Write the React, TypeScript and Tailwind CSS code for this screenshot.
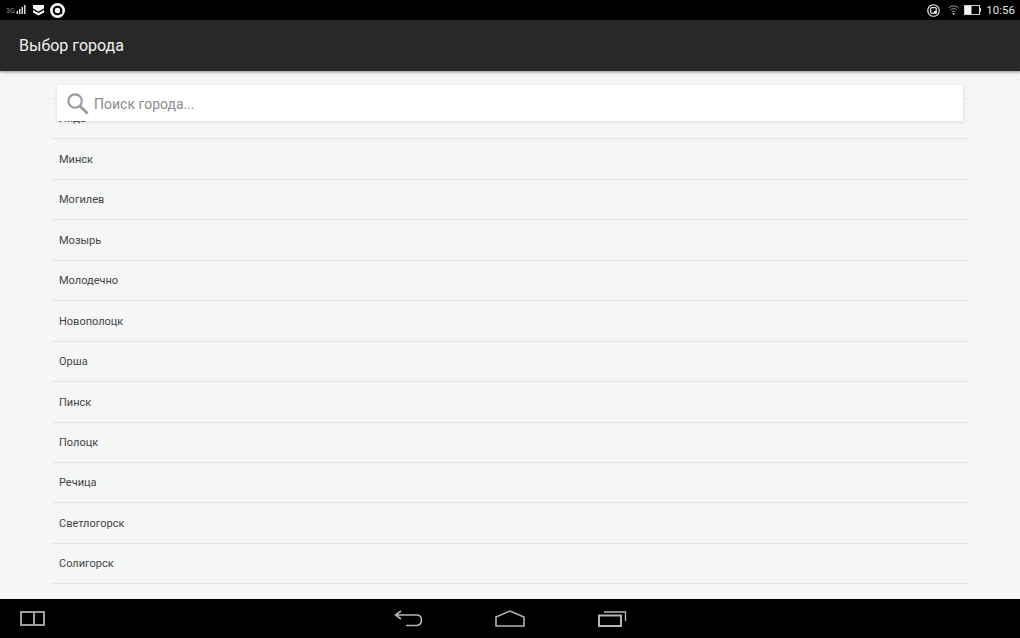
import React from "react";

const cities = ["Лида", "Минск", "Могилев", "Мозырь", "Молодечно", "Новополоцк", "Орша", "Пинск", "Полоцк", "Речица", "Светлогорск", "Солигорск"];

function StatusBar() {
  return (
    <div className="h-5 shrink-0 bg-black flex items-center justify-between pl-[6px] pr-[5px]">
      <div className="flex items-center">
        <svg width="20" height="12" viewBox="0 0 20 12" className="mr-[7px]">
          <text x="0" y="9" fontSize="7" fill="#8f8f8f" fontFamily="Roboto, sans-serif">3G</text>
          <rect x="10.500" y="7" width="1.500" height="3" fill="#d8d8d8" />
          <rect x="13" y="5" width="1.500" height="5" fill="#d8d8d8" />
          <rect x="15.500" y="3" width="1.500" height="7" fill="#d8d8d8" />
          <rect x="18" y="1" width="1.500" height="9" fill="#d8d8d8" />
        </svg>
        <svg width="11" height="12" viewBox="0 0 11 12" className="mr-[6px]">
          <path d="M0 1h11v3.500L5.500 7.500 0 4.500z" fill="#f2f2f2" />
          <path d="M0 6l5.500 3 5.500-3v2.500L5.500 11.500 0 8.500z" fill="#f2f2f2" />
        </svg>
        <svg width="15" height="15" viewBox="0 0 15 15">
          <circle cx="7.500" cy="7.500" r="7.500" fill="#f5f5f5" />
          <circle cx="7.500" cy="7.500" r="3.800" fill="none" stroke="#000" strokeWidth="2" />
          <rect x="10" y="7" width="2.200" height="4" fill="#000" />
        </svg>
      </div>
      <div className="flex items-center">
        <svg width="13" height="13" viewBox="0 0 14 14" className="mr-[8px]">
          <circle cx="7" cy="7" r="6.200" fill="none" stroke="#e8e8e8" strokeWidth="1.300" />
          <rect x="4" y="3.800" width="6" height="6" rx="1" fill="none" stroke="#e8e8e8" strokeWidth="1.300" />
          <circle cx="9" cy="9" r="1.600" fill="#e8e8e8" />
        </svg>
        <svg width="11" height="10" viewBox="0 0 11 10" className="mr-[5px]">
          <path d="M0.500 3a7 7 0 0 1 10 0M2.200 5a4.600 4.600 0 0 1 6.600 0M3.800 7a2.300 2.300 0 0 1 3.400 0" fill="none" stroke="#9c9c9c" strokeWidth="1" />
          <circle cx="5.500" cy="8.700" r="1" fill="#c8c8c8" />
        </svg>
        <svg width="17" height="10" viewBox="0 0 17 10" className="mr-[5px]">
          <rect x="0.500" y="0.500" width="15" height="9" fill="none" stroke="#cfcfcf" />
          <rect x="1" y="1" width="6.500" height="8" fill="#f5f5f5" />
          <rect x="16" y="3" width="1" height="4" fill="#cfcfcf" />
        </svg>
        <span className="text-[11.500px] leading-5 text-[#e4e4e4]">10:56</span>
      </div>
    </div>
  );
}

function NavBar() {
  return (
    <div className="h-[39px] shrink-0 bg-black grid grid-cols-[1fr_auto_1fr] items-center">
      <div className="pl-5">
        <svg width="25" height="15" viewBox="0 0 25 15" className="block">
          <path d="M1 1h23v13H1zM14 1v13" fill="none" stroke="#9e9e9e" strokeWidth="2" />
        </svg>
      </div>
      <div className="flex items-center">
        <svg width="29" height="17" viewBox="0 0 29 17" className="mr-[72px] block">
          <path d="M7 1L1.500 5 7 9M1.500 5H22.500Q27.500 5 27.500 10T22.500 15.500H12" fill="none" stroke="#b4b4b4" strokeWidth="1.600" />
        </svg>
        <svg width="30" height="17" viewBox="0 0 30 17" className="mr-[73px] block">
          <path d="M1 7L15 1l14 6v9H1z" fill="none" stroke="#b4b4b4" strokeWidth="1.600" />
        </svg>
        <svg width="29" height="17" viewBox="0 0 29 17" className="block">
          <path d="M1 5.500h22v10.500H1z" fill="none" stroke="#b4b4b4" strokeWidth="2" />
          <path d="M6 2h21.500v9" fill="none" stroke="#b4b4b4" strokeWidth="1.400" />
        </svg>
      </div>
      <div />
    </div>
  );
}

export default function App() {
  return (
    <div className="w-[1020px] h-[638px] flex flex-col overflow-hidden bg-[#f5f7f6] font-['Roboto',sans-serif]">
      <StatusBar />
      <header className="h-[51px] shrink-0 bg-[#282828] flex items-center pl-[19px] pt-px text-[16px] text-[#f0f0f0] shadow-[0_1px_3px_rgba(0,0,0,0.45)] z-20">
        Выбор города
      </header>
      <main className="flex-1 min-h-0 overflow-hidden relative pl-[52px] pr-[51px] pt-[27px]">
        <div className="absolute z-10 left-[57px] top-[14px] w-[906px] h-[36px] bg-white shadow-[0_1px_4px_rgba(0,0,0,0.13)] flex items-center pl-[9px]">
          <svg width="23" height="23" viewBox="0 0 24 24" className="mr-[5px] mt-px shrink-0">
            <circle cx="9.500" cy="9.500" r="7" fill="none" stroke="#9a9a9a" strokeWidth="2.200" />
            <path d="M14.800 14.800L22.500 22.500" stroke="#9a9a9a" strokeWidth="3" />
          </svg>
          <span className="text-[14px] text-[#8c8c8c] mt-[2px]">Поиск города...</span>
        </div>
        <div className="border-t border-[#e6e8e7]">
          {cities.map((c) => (
            <div key={c} className="h-[40.45px] border-b border-[#e2e4e3] pl-[7px] pt-[2px] flex items-center text-[11px] text-[#444]">
              {c}
            </div>
          ))}
        </div>
      </main>
      <NavBar />
    </div>
  );
}
